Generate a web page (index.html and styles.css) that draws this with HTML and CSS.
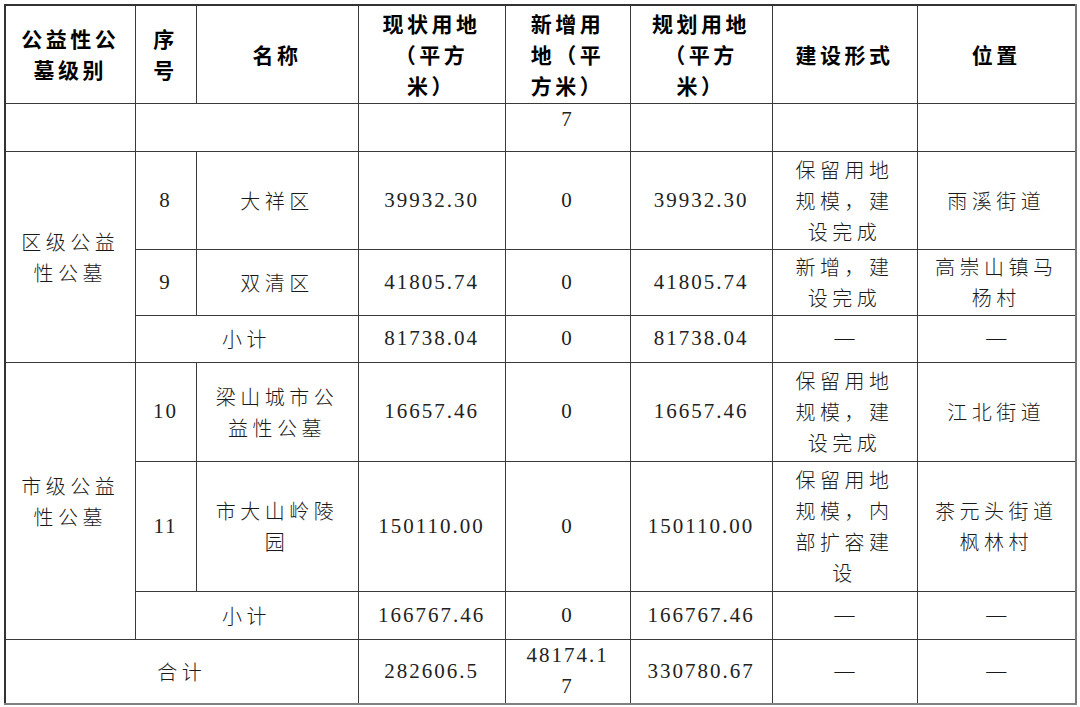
FILE: index.html
```html
<!DOCTYPE html>
<html lang="zh-CN">
<head>
<meta charset="utf-8">
<title>公益性公墓</title>
<link rel="stylesheet" href="styles.css">
</head>
<body>
<table class="grid">
  <colgroup>
    <col class="c1"><col class="c2"><col class="c3"><col class="c4">
    <col class="c5"><col class="c6"><col class="c7"><col class="c8">
  </colgroup>
  <tr class="r-head">
    <th>公益性公<br>墓级别</th>
    <th>序<br>号</th>
    <th>名称</th>
    <th>现状用地<br>（平方<br>米）</th>
    <th>新增用<br>地（平<br>方米）</th>
    <th>规划用地<br>（平方<br>米）</th>
    <th>建设形式</th>
    <th>位置</th>
  </tr>
  <tr class="r-cont">
    <td></td>
    <td colspan="2"></td>
    <td></td>
    <td class="num top">7</td>
    <td></td>
    <td></td>
    <td></td>
  </tr>
  <tr class="r-a">
    <td rowspan="3">区级公益<br>性公墓</td>
    <td class="num">8</td>
    <td>大祥区</td>
    <td class="num">39932.30</td>
    <td class="num">0</td>
    <td class="num">39932.30</td>
    <td>保留用地<br>规模，建<br>设完成</td>
    <td>雨溪街道</td>
  </tr>
  <tr class="r-b">
    <td class="num">9</td>
    <td>双清区</td>
    <td class="num">41805.74</td>
    <td class="num">0</td>
    <td class="num">41805.74</td>
    <td>新增，建<br>设完成</td>
    <td>高崇山镇马<br>杨村</td>
  </tr>
  <tr class="r-sub1">
    <td colspan="2">小计</td>
    <td class="num">81738.04</td>
    <td class="num">0</td>
    <td class="num">81738.04</td>
    <td class="dash">—</td>
    <td class="dash">—</td>
  </tr>
  <tr class="r-c">
    <td rowspan="3">市级公益<br>性公墓</td>
    <td class="num">10</td>
    <td>梁山城市公<br>益性公墓</td>
    <td class="num">16657.46</td>
    <td class="num">0</td>
    <td class="num">16657.46</td>
    <td>保留用地<br>规模，建<br>设完成</td>
    <td>江北街道</td>
  </tr>
  <tr class="r-d">
    <td class="num">11</td>
    <td>市大山岭陵<br>园</td>
    <td class="num">150110.00</td>
    <td class="num">0</td>
    <td class="num">150110.00</td>
    <td>保留用地<br>规模，内<br>部扩容建<br>设</td>
    <td>茶元头街道<br>枫林村</td>
  </tr>
  <tr class="r-sub2">
    <td colspan="2">小计</td>
    <td class="num">166767.46</td>
    <td class="num">0</td>
    <td class="num">166767.46</td>
    <td class="dash">—</td>
    <td class="dash">—</td>
  </tr>
  <tr class="r-total">
    <td colspan="3">合计</td>
    <td class="num">282606.5</td>
    <td class="num">48174.1<br>7</td>
    <td class="num">330780.67</td>
    <td class="dash">—</td>
    <td class="dash">—</td>
  </tr>
</table>
</body>
</html>
```

FILE: styles.css
```css
html, body {
  margin: 0;
  padding: 0;
  background: #ffffff;
}

body {
  padding: 4px 0 0 4px;
}

.grid {
  border-collapse: collapse;
  table-layout: fixed;
  width: 1071px;
  font-family: "Noto Sans CJK SC", sans-serif;
  color: #1a1a1a;
  border-top: 2px solid #333333;
  border-left: 2px solid #333333;
  border-right: 2px solid #777777;
  border-bottom: 2px solid #808080;
}

.c1 { width: 130px; }
.c2 { width: 61px; }
.c3 { width: 162px; }
.c4 { width: 147px; }
.c5 { width: 125px; }
.c6 { width: 142px; }
.c7 { width: 145px; }
.c8 { width: 159px; }

.grid th,
.grid td {
  border: 1px solid #3a3a3a;
  padding: 0 2px;
  text-align: center;
  vertical-align: middle;
  line-height: 31px;
}

.grid th {
  font-weight: 700;
  font-size: 21px;
  letter-spacing: 3.5px;
  color: #000000;
}

.grid td {
  font-weight: 300;
  font-size: 20px;
  letter-spacing: 4.5px;
}

.grid td.num {
  font-family: "Liberation Serif", "Noto Sans CJK SC", serif;
  font-weight: 400;
  font-size: 21px;
  letter-spacing: 2px;
  color: #222222;
}

.grid td.top {
  vertical-align: top;
  padding-top: 0;
}

.grid td.dash {
  font-family: "Liberation Serif", serif;
  font-weight: 400;
  letter-spacing: 0;
  font-size: 20px;
}

.r-head { height: 98px; }
.r-cont { height: 48px; }
.r-a { height: 98px; }
.r-b { height: 66px; }
.r-sub1 { height: 47px; }
.r-c { height: 99px; }
.r-d { height: 130px; }
.r-sub2 { height: 48px; }
.r-total { height: 65px; }
```
